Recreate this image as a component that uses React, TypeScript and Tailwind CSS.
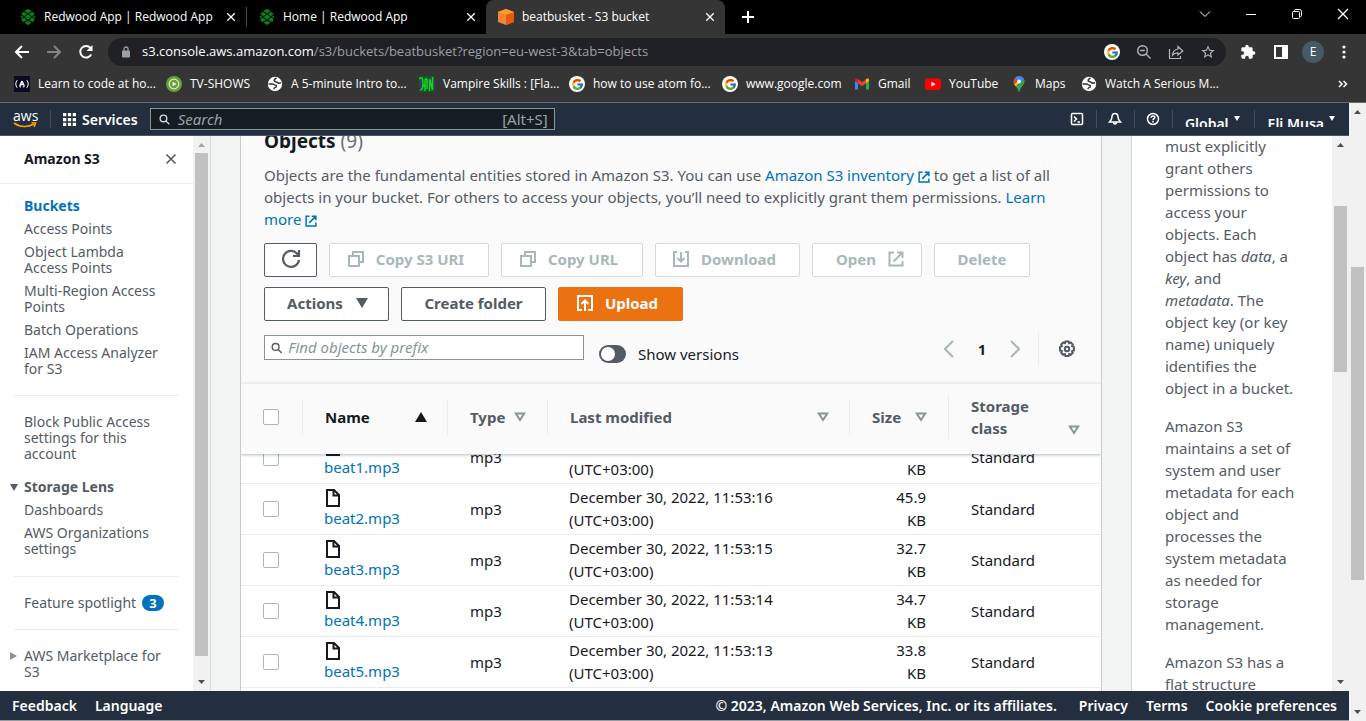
import React from "react";
import clsx from "clsx";
import { FcGoogle } from "react-icons/fc";
import { SiRedwoodjs } from "react-icons/si";
import { MdExtension, MdStarOutline } from "react-icons/md";

const bookmarks = [
  { icon: "fcc", label: "Learn to code at ho...", width: "w-[152px]" },
  { icon: "play", label: "TV-SHOWS", width: "w-[101px]" },
  { icon: "globe", label: "A 5-minute Intro to...", width: "w-[152px]" },
  { icon: "vampire", label: "Vampire Skills : [Fla...", width: "w-[150px]" },
  { icon: "google", label: "how to use atom fo...", width: "w-[153px]" },
  { icon: "google", label: "www.google.com", width: "w-[132px]" },
  { icon: "gmail", label: "Gmail", width: "w-[71px]" },
  { icon: "youtube", label: "YouTube", width: "w-[86px]" },
  { icon: "maps", label: "Maps", width: "w-[70px]" },
  { icon: "globe", label: "Watch A Serious M...", width: "w-[160px]" },
];

const objects = [
  { name: "beat1.mp3", modified: "December 30, 2022, 11:53:17", size: "33.5" },
  { name: "beat2.mp3", modified: "December 30, 2022, 11:53:16", size: "45.9" },
  { name: "beat3.mp3", modified: "December 30, 2022, 11:53:15", size: "32.7" },
  { name: "beat4.mp3", modified: "December 30, 2022, 11:53:14", size: "34.7" },
  { name: "beat5.mp3", modified: "December 30, 2022, 11:53:13", size: "33.8" },
];

function BookmarkIcon({ name }: { name: string }) {
  switch (name) {
    case "fcc":
      return (
        <svg viewBox="0 0 16 16" className="size-4" fill="none" stroke="#fff">
          <rect width="16" height="16" fill="#0a0a23" stroke="none" />
          <path d="M3.2 4.2C1.3 6.4 1.3 9.6 3.2 11.8M12.8 4.2c1.9 2.2 1.9 5.4 0 7.6" />
          <path d="M8 5 6 9.500c-.2.800.2 1.400.8 1.500M8 5l2 4.500c.2.800-.2 1.400-.8 1.500M7.200 8.500h1.600" strokeWidth="1.4" />
        </svg>
      );
    case "play":
      return (
        <svg viewBox="0 0 16 16" className="size-4">
          <circle cx="8" cy="8" r="8" fill="#689f38" />
          <circle cx="8" cy="8" r="4.8" fill="#689f38" stroke="#dcedc8" strokeWidth="1.2" />
          <path d="m6.6 5.8 3.8 2.2-3.8 2.2z" fill="#fff" />
        </svg>
      );
    case "vampire":
      return (
        <svg viewBox="0 0 16 16" className="size-4" fill="none">
          <rect width="16" height="16" fill="#0d5c20" />
          <path d="M3 1c-2 3 1 4-1 7s1 5 0 7M9 1c2 4-2 6 0 13M15.500 3v9" stroke="#5c1f9a" strokeWidth="1.600" />
          <path d="M0 3c3-3 4 0 4 5s-1 6-3 6M6 15V5c0-3 2-3 2 0v8M10.500 15V3l3 11V1M4 10h3" stroke="#12d81b" strokeWidth="1.500" />
        </svg>
      );
    case "google":
      return (
        <span className="flex size-4 items-center justify-center rounded-full bg-white">
          <FcGoogle className="size-[13px]" />
        </span>
      );
    case "gmail":
      return (
        <svg viewBox="0 0 16 16" className="size-4">
          <path d="M1 5v8.500h3V7z" fill="#4285f4" />
          <path d="M12 7v6.500h3V5z" fill="#34a853" />
          <path d="M1 3.800C1 2.500 2.500 2 3.500 2.800L4 3.200v4L1 5z" fill="#c5221f" />
          <path d="m4 3.200 4 3 4-3v4l-4 3-4-3z" fill="#ea4335" />
          <path d="m12 3.200.5-.4C13.500 2 15 2.500 15 3.800V5l-3 2.200z" fill="#fbbc04" />
        </svg>
      );
    case "youtube":
      return (
        <svg viewBox="0 0 16 16" className="size-4">
          <rect y="2.500" width="16" height="11.500" rx="2.800" fill="#f00" />
          <path d="m6.400 5.800 4.200 2.400-4.200 2.400z" fill="#fff" />
        </svg>
      );
    case "maps":
      return (
        <svg viewBox="0 0 16 16" className="size-4">
          <path d="M8 0c2.500 0 4.500 1.500 5.200 3.400L8 8 3.700 2C4.800.7 6.300 0 8 0z" fill="#4285f4" />
          <path d="M3.700 2 7 5 3.100 8a5.500 5.500 0 0 1 .6-6z" fill="#ea4335" />
          <path d="M3.100 8c.4 1 1.200 1.800 2 2.700L10 5 7 5z" fill="#fbbc04" />
          <path d="M13.200 3.400c.8 2 .2 3.800-1.200 5.600C10 11.500 9 13 8.500 15.500c-.2.600-.8.600-1 0-.3-2-1.200-3.300-2.400-4.800z" fill="#34a853" />
          <circle cx="8" cy="5.400" r="1.900" fill="#fff" />
        </svg>
      );
    default:
      return (
        <svg viewBox="0 0 16 16" className="size-4">
          <circle cx="8" cy="8" r="7.200" fill="#fff" />
          <path d="M9.500 2C7.500 3 6.500 4.200 7.500 5.200c1 .8 2.300.3 3 1.300s2 .8 3.500.3" fill="none" stroke="#353535" strokeWidth="1.500" />
          <path d="M1.500 8H5.500c1.500 0 1.800 1.200 3 1.300 1.300.2 1.200 1.800 0 2.100-1.300.3-1.300 1-1.700 1.800" fill="none" stroke="#353535" strokeWidth="1.400" />
        </svg>
      );
  }
}

function CloseIcon({ className }: { className?: string }) {
  return (
    <svg viewBox="0 0 12 12" className={className} fill="none" stroke="currentColor" strokeWidth="1.600">
      <path d="m1.500 1.500 9 9M10.500 1.500l-9 9" />
    </svg>
  );
}

function ExternalIcon({ className }: { className?: string }) {
  return (
    <svg viewBox="0 0 16 16" className={className} fill="none" stroke="currentColor" strokeWidth="2">
      <path d="M6 1.500H1.500v13h13V10M9 1.500h5.500V7M5.500 10.500l9-9" />
    </svg>
  );
}

function CopyIcon() {
  return (
    <svg viewBox="0 0 16 16" className="size-4" fill="none" stroke="currentColor" strokeWidth="2">
      <path d="M1 5h10v10H1zM5 5V1h10v10h-4" />
    </svg>
  );
}

function SearchIcon({ className }: { className?: string }) {
  return (
    <svg viewBox="0 0 16 16" className={className} fill="none" stroke="currentColor" strokeWidth="2">
      <circle cx="6.500" cy="6.500" r="4.800" />
      <path d="m10 10 5 5" />
    </svg>
  );
}

function SortIcon({ active }: { active?: boolean }) {
  return active ? (
    <svg viewBox="0 0 12 10" className="h-[10px] w-3 shrink-0">
      <path d="m6 0 6 10H0z" fill="#16191f" />
    </svg>
  ) : (
    <svg viewBox="0 0 12 10" className="h-[10px] w-3 shrink-0" fill="none" stroke="#879596" strokeWidth="2">
      <path d="M1.800 1.500h8.400L6 8z" />
    </svg>
  );
}

function Scrollbar({ before, thumb, after, idleUp }: { before: number; thumb: number; after: number; idleUp?: boolean }) {
  return (
    <div className="flex w-[17px] shrink-0 flex-col bg-[#f1f1f1]" aria-hidden="true">
      <svg viewBox="0 0 17 17" className="size-[17px]">
        <path d="m5 11 3.500-4 3.500 4z" fill={idleUp ? "#a3a3a3" : "#505050"} />
      </svg>
      <div className="flex flex-1 flex-col px-0.5">
        <div style={{ flexGrow: before }} />
        <div className="bg-[#c1c1c1]" style={{ flexGrow: thumb }} />
        <div style={{ flexGrow: after }} />
      </div>
      <svg viewBox="0 0 17 17" className="size-[17px]">
        <path d="m5 6 3.500 4L12 6z" fill="#505050" />
      </svg>
    </div>
  );
}

function BrowserTab({ title, active, divider }: { title: string; active?: boolean; divider?: boolean }) {
  return (
    <div
      className={clsx(
        "flex w-[239px] items-center pr-[10px] pl-3",
        active ? "rounded-t-lg bg-[#353535]" : "bg-black"
      )}
    >
      {active ? (
        <svg viewBox="0 0 16 16" className="size-4">
          <path d="m8 0 8 3v10l-8 3-8-3V3z" fill="#f58536" />
          <path d="m8 0 8 3-8 3-8-3z" fill="#ff9a2e" />
          <path d="M8 6l8-3v10l-8 3z" fill="#e8590c" />
        </svg>
      ) : (
        <SiRedwoodjs className="size-4 text-[#0a7d20]" />
      )}
      <span className="ml-2 flex-1 truncate">{title}</span>
      <button type="button" aria-label={"Close " + title}>
        <CloseIcon className="size-[10px]" />
      </button>
      {divider && <span className="-mr-[10px] ml-[10px] h-5 w-px bg-[#4a4a4a]" />}
    </div>
  );
}

function Browser() {
  return (
    <header className="shrink-0 border-b border-[#6b6b6b] bg-[#353535] font-['Open_Sans',sans-serif] text-[12px] text-white">
      <div className="flex h-[34px] bg-black pl-2">
        <BrowserTab title="Redwood App | Redwood App" divider />
        <BrowserTab title="Home | Redwood App" />
        <BrowserTab title="beatbusket - S3 bucket" active />
        <button type="button" aria-label="New tab" className="ml-4">
          <svg viewBox="0 0 14 14" className="size-[14px]" stroke="currentColor" strokeWidth="2">
            <path d="M7 1v12M1 7h12" />
          </svg>
        </button>
        <div className="ml-auto flex items-center gap-[34px] pr-[17px] pb-[6px]">
          <button type="button" aria-label="Search tabs">
            <svg viewBox="0 0 12 12" className="size-3" fill="none" stroke="currentColor">
              <path d="m1 3.500 5 5 5-5" />
            </svg>
          </button>
          <button type="button" aria-label="Minimize">
            <svg viewBox="0 0 12 12" className="size-3" stroke="currentColor">
              <path d="M1 6.500h10" />
            </svg>
          </button>
          <button type="button" aria-label="Restore">
            <svg viewBox="0 0 12 12" className="size-3" fill="none" stroke="currentColor">
              <rect x="1.500" y="3.500" width="7" height="7" rx="1" />
              <path d="M3.500 3.500v-1a1 1 0 0 1 1-1h4a2 2 0 0 1 2 2v4a1 1 0 0 1-1 1h-1" />
            </svg>
          </button>
          <button type="button" aria-label="Close window">
            <svg viewBox="0 0 12 12" className="size-3" stroke="currentColor" strokeWidth="1.300">
              <path d="m1 1 10 10M11 1 1 11" />
            </svg>
          </button>
        </div>
      </div>

      <div className="flex h-9 items-center pr-5 pl-[14px]">
        <button type="button" aria-label="Back">
          <svg viewBox="0 0 16 16" className="size-4" fill="none" stroke="currentColor" strokeWidth="2">
            <path d="M15 8H2M8 2 2 8l6 6" />
          </svg>
        </button>
        <button type="button" aria-label="Forward" className="ml-4 text-[#848484]">
          <svg viewBox="0 0 16 16" className="size-4" fill="none" stroke="currentColor" strokeWidth="2">
            <path d="M1 8h13M8 2l6 6-6 6" />
          </svg>
        </button>
        <button type="button" aria-label="Reload" className="ml-4">
          <svg viewBox="0 0 16 16" className="size-4" fill="none" stroke="currentColor" strokeWidth="2">
            <path d="M13.200 10.500A5.800 5.800 0 1 1 12.500 4" />
            <path d="M14.500 1v6h-6z" fill="currentColor" stroke="none" />
          </svg>
        </button>
        <div className="ml-[14px] flex h-7 flex-1 items-center rounded-full bg-[#202124] pr-[10px] pl-[13px] text-[13px]">
          <svg viewBox="0 0 10 12" className="h-3 w-[10px]">
            <rect x="1" y="4.500" width="8" height="7" rx="1" fill="#9aa0a6" />
            <path d="M3 5V3a2 2 0 0 1 4 0v2" fill="none" stroke="#9aa0a6" strokeWidth="1.300" />
          </svg>
          <p className="ml-[11px] flex-1 text-[#9aa0a6]">
            <span className="text-white">s3.console.aws.amazon.com</span>
            /s3/buckets/beatbusket?region=eu-west-3&amp;tab=objects
          </p>
          <div className="flex items-center gap-4 text-[#b5b8bb]">
            <BookmarkIcon name="google" />
            <svg viewBox="0 0 16 16" className="size-4" fill="none" stroke="currentColor" strokeWidth="1.400">
              <circle cx="6.500" cy="6.500" r="4.800" />
              <path d="m10 10 4.500 4.500M4.200 6.500h4.600" />
            </svg>
            <svg viewBox="0 0 16 16" className="size-4" fill="none" stroke="currentColor" strokeWidth="1.200">
              <path d="M1.500 5v9.500h11V12" />
              <path d="M10 2.500 14.800 7 10 11V8.800c-2.500 0-4.200.7-5.500 2.400.3-3 2-5.700 5.500-6.200z" />
            </svg>
            <MdStarOutline className="size-4" />
          </div>
        </div>
        <div className="ml-[14px] flex items-center gap-[18px]">
          <MdExtension className="size-4" />
          <svg viewBox="0 0 14 14" className="size-[14px]">
            <path d="M0 0h14v14H0zM2 2v10h6V2z" fill="#fff" fillRule="evenodd" />
          </svg>
          <span className="-ml-1 flex size-[22px] items-center justify-center rounded-full bg-[#455a64] text-[12px]">E</span>
          <svg viewBox="0 0 4 14" className="h-[14px] w-1" fill="#fff">
            <circle cx="2" cy="2" r="1.600" />
            <circle cx="2" cy="7" r="1.600" />
            <circle cx="2" cy="12" r="1.600" />
          </svg>
        </div>
      </div>

      <nav className="flex h-8 items-center pr-[18px] pb-1 pl-[14px]" aria-label="Bookmarks">
        {bookmarks.map((item) => (
          <a
            key={item.label}
            href="#"
            className={clsx("flex shrink-0 items-center gap-2 whitespace-nowrap", item.width)}
          >
            <BookmarkIcon name={item.icon} />
            {item.label}
          </a>
        ))}
        <svg viewBox="0 0 10 8" className="ml-auto h-2 w-[10px]" fill="none" stroke="#fff" strokeWidth="1.500">
          <path d="m1 1 3 3-3 3M5.500 1l3 3-3 3" />
        </svg>
      </nav>
    </header>
  );
}

function TopNav() {
  return (
    <div className="flex h-[33px] shrink-0 items-center border-b border-[#4b5563] bg-[#232f3e] text-white">
      <a href="#" aria-label="AWS home" className="ml-[13px] w-6 font-['Open_Sans',sans-serif] text-[14px] leading-3">
        aws
        <svg viewBox="0 0 24 6" className="h-[6px] w-6" fill="none" stroke="#f90" strokeWidth="1.600">
          <path d="M1 1c6 4.500 14 4.500 20 1M18.500.8l4 .2-1.300 4" />
        </svg>
      </a>
      <span className="ml-[13px] h-[18px] w-px bg-[#414d5c]" />
      <button type="button" className="ml-3 flex items-center gap-[6px] text-[14px] font-semibold">
        <svg viewBox="0 0 12 12" className="size-[13px]" fill="#fff">
          <path d="M0 0h3v3H0zM4.500 0h3v3h-3zM9 0h3v3H9zM0 4.500h3v3H0zM4.500 4.500h3v3h-3zM9 4.500h3v3H9zM0 9h3v3H0zM4.500 9h3v3h-3zM9 9h3v3H9z" />
        </svg>
        Services
      </button>
      <label className="ml-3 flex h-[22px] w-[405px] items-center border border-[#879596] bg-[#161c24] px-[6px] text-[15px] text-[#95a5a6]">
        <SearchIcon className="ml-[2px] size-[11px] text-[#d5dbdb]" />
        <input
          type="text"
          aria-label="Search"
          placeholder="Search"
          className="ml-2 min-w-0 flex-1 bg-transparent outline-none placeholder:text-[#95a5a6] placeholder:italic"
        />
        [Alt+S]
      </label>
      <div className="ml-auto flex items-center pr-[14px]">
        <button type="button" aria-label="CloudShell">
          <svg viewBox="0 0 14 14" className="size-[14px]" fill="none" stroke="#fff" strokeWidth="1.500">
            <rect x="1.500" y="1.500" width="11" height="11" rx="1" />
            <path d="m4 4.500 2.500 2.500L4 9.500M7.500 10H10" />
          </svg>
        </button>
        <span className="mr-[11px] ml-3 h-[18px] w-px bg-[#414d5c]" />
        <button type="button" aria-label="Notifications">
          <svg viewBox="0 0 14 14" className="size-[14px]" fill="none" stroke="#fff" strokeWidth="1.500">
            <path d="M7 1.500c-2 0-3 1.500-3 3.500 0 2-1 3.500-2.500 5h11C11 8.500 10 7 10 5c0-2-1-3.500-3-3.500zM5.500 10.500c0 2 3 2 3 0" />
          </svg>
        </button>
        <span className="mr-[11px] ml-3 h-[18px] w-px bg-[#414d5c]" />
        <button type="button" aria-label="Help">
          <svg viewBox="0 0 14 14" className="size-[14px]" fill="none" stroke="#fff" strokeWidth="1.500">
            <circle cx="7" cy="7" r="5.500" />
            <path d="M5.200 5.800C5.200 3.300 9 3.500 8.800 5.600 8.700 6.700 7 6.800 7 8.200M7 9v1.400" />
          </svg>
        </button>
        <span className="ml-3 h-[18px] w-px bg-[#414d5c]" />
        <button type="button" className="ml-3 flex h-4 gap-[5px] overflow-hidden text-[14px] leading-[26px] font-semibold">
          Global
          <svg viewBox="0 0 6 5" className="mt-[5px] h-[5px] w-[6px]">
            <path d="M0 0h6L3 5z" fill="#fff" />
          </svg>
        </button>
        <span className="ml-[14px] h-[18px] w-px bg-[#414d5c]" />
        <button type="button" className="ml-[13px] flex h-4 gap-[5px] overflow-hidden text-[14px] leading-[26px] font-semibold">
          Eli Musa
          <svg viewBox="0 0 6 5" className="mt-[5px] h-[5px] w-[6px]">
            <path d="M0 0h6L3 5z" fill="#fff" />
          </svg>
        </button>
      </div>
    </div>
  );
}

function SideNav() {
  return (
    <aside className="flex w-[211px] shrink-0 border-r border-[#d5dbdb] bg-white text-[#545b64]">
      <div className="flex-1 overflow-hidden">
        <div className="flex h-12 items-center justify-between border-b border-[#eaeded] pr-4 pb-[2px] pl-6">
          <h2 className="text-[14px] font-bold text-[#16191f]">Amazon S3</h2>
          <button type="button" aria-label="Close navigation">
            <CloseIcon className="size-3" />
          </button>
        </div>
        <nav className="pt-[14px] pr-[14px] pl-[14px] text-[14px] leading-4">
          <ul className="flex flex-col gap-[7px] px-[10px] pb-[18px]">
            <li><a href="#" className="font-bold text-[#0073bb]">Buckets</a></li>
            <li><a href="#">Access Points</a></li>
            <li><a href="#">Object Lambda<br />Access Points</a></li>
            <li><a href="#">Multi-Region Access<br />Points</a></li>
            <li><a href="#">Batch Operations</a></li>
            <li><a href="#">IAM Access Analyzer<br />for S3</a></li>
          </ul>
          <div className="border-t border-[#eaeded] px-[10px] pt-[18px] pb-[19px] whitespace-nowrap">
            <a href="#">Block Public Access<br />settings for this<br />account</a>
            <button type="button" className="mt-[17px] -ml-[14px] flex items-center gap-[6px] font-bold">
              <svg viewBox="0 0 8 7" className="h-[7px] w-2">
                <path d="M0 0h8L4 7z" fill="#545b64" />
              </svg>
              Storage Lens
            </button>
            <ul className="mt-[7px] flex flex-col gap-[7px]">
              <li><a href="#">Dashboards</a></li>
              <li><a href="#">AWS Organizations<br />settings</a></li>
            </ul>
          </div>
          <div className="flex items-center gap-[6px] border-t border-[#eaeded] py-[18px] pl-[10px] whitespace-nowrap">
            <a href="#">Feature spotlight</a>
            <span className="rounded-full bg-[#0073bb] px-[7px] text-[13px] font-bold text-white">3</span>
          </div>
          <div className="border-t border-[#eaeded] py-[18px]">
            <button type="button" className="-ml-1 flex items-start gap-[7px] text-left whitespace-nowrap">
              <svg viewBox="0 0 7 8" className="mt-1 h-2 w-[7px] shrink-0">
                <path d="m0 0 7 4-7 4z" fill="#879596" />
              </svg>
              <span>AWS Marketplace for<br />S3</span>
            </button>
          </div>
        </nav>
      </div>
      <Scrollbar before={0} thumb={503} after={18} idleUp />
    </aside>
  );
}

type ButtonProps = { children: React.ReactNode; className: string; disabled?: boolean; label?: string };

function ActionButton({ children, className, disabled, label }: ButtonProps) {
  return (
    <button
      type="button"
      disabled={disabled}
      aria-label={label}
      className={clsx(
        "flex h-[34px] items-center justify-center rounded-[2px] border pb-[2px] text-[15px] font-bold",
        disabled && "border-[#d5dbdb] bg-white text-[#aab7b8]",
        className
      )}
    >
      {children}
    </button>
  );
}

function Columns() {
  return (
    <colgroup>
      <col className="w-[61px]" />
      <col className="w-[145px]" />
      <col className="w-[100px]" />
      <col className="w-[302px]" />
      <col className="w-[99px]" />
      <col />
    </colgroup>
  );
}

function Checkbox({ label }: { label: string }) {
  return (
    <input
      type="checkbox"
      aria-label={label}
      className="block size-4 appearance-none rounded-[2px] border border-[#aab7b8] bg-white"
    />
  );
}

function HeaderCell({ title, active, className }: { title: string; active?: boolean; className?: string }) {
  return (
    <th className="p-0 pb-[3px] text-left font-bold">
      <div className={clsx("flex min-h-[36px] items-center justify-between border-l border-[#eaeded] pl-[22px]", className)}>
        {title}
        <SortIcon active={active} />
      </div>
    </th>
  );
}

function ObjectsCard() {
  return (
    <section className="mx-[29px] flex min-w-0 flex-1 flex-col overflow-hidden border-x border-[#c6cccc] bg-white">
      <div className="bg-[#fafafa] px-[23px] pb-5">
        <h2 className="-mt-[6px] text-[19px] leading-[22px] font-bold text-[#16191f]">
          Objects <span className="font-normal text-[#687078]">(9)</span>
        </h2>
        <p className="mt-3 text-[15px] leading-[22px] whitespace-nowrap text-[#545b64]">
          Objects are the fundamental entities stored in Amazon S3. You can use{" "}
          <a href="#" className="text-[#0073bb]">
            Amazon S3 inventory <ExternalIcon className="inline size-3" />
          </a>{" "}
          to get a list of all<br />
          objects in your bucket. For others to access your objects, you’ll need to explicitly grant them permissions.{" "}
          <a href="#" className="text-[#0073bb]">
            Learn<br />
            more <ExternalIcon className="inline size-3" />
          </a>
        </p>
        <div className="mt-[13px] flex flex-wrap gap-x-3 gap-y-[10px]">
          <ActionButton label="Refresh" className="w-[53px] border-[#545b64] bg-white text-[#545b64]">
            <svg viewBox="0 0 20 20" className="size-5" fill="none" stroke="currentColor" strokeWidth="2.200">
              <path d="M18 11a8 8 0 1 1-2-6.500l1.500 2M18 1v6h-6" />
            </svg>
          </ActionButton>
          <ActionButton disabled className="w-40 gap-3 pr-[6px]">
            <CopyIcon />
            Copy S3 URI
          </ActionButton>
          <ActionButton disabled className="w-[142px] gap-3 pr-[6px]">
            <CopyIcon />
            Copy URL
          </ActionButton>
          <ActionButton disabled className="w-[145px] gap-3 pr-[6px]">
            <svg viewBox="0 0 16 16" className="size-4" fill="none" stroke="currentColor" strokeWidth="2">
              <path d="M4 1H1v14h14V1h-3M8 1v9M4.500 7 8 10.500 11.500 7" />
            </svg>
            Download
          </ActionButton>
          <ActionButton disabled className="w-[110px] gap-3 pl-[6px]">
            Open
            <ExternalIcon className="size-4" />
          </ActionButton>
          <ActionButton disabled className="w-24">Delete</ActionButton>
          <ActionButton className="w-[125px] gap-[13px] border-[#545b64] bg-white pl-[2px] text-[#545b64]">
            Actions
            <svg viewBox="0 0 12 10" className="h-[10px] w-3">
              <path d="M0 0h12L6 10z" fill="currentColor" />
            </svg>
          </ActionButton>
          <ActionButton className="w-[145px] border-[#545b64] bg-white text-[#545b64]">Create folder</ActionButton>
          <ActionButton className="w-[125px] gap-3 border-[#ec7211] bg-[#ec7211] pr-[6px] text-white">
            <svg viewBox="0 0 16 16" className="size-4" fill="none" stroke="currentColor" strokeWidth="2">
              <path d="M5 15H1V1h14v14h-4M8 16V6M4.500 9 8 5.500 11.500 9" />
            </svg>
            Upload
          </ActionButton>
        </div>
        <div className="mt-[14px] flex h-7 items-center">
          <label className="mb-[3px] flex h-[25px] w-80 items-center border border-[#879596] bg-white px-[6px]">
            <SearchIcon className="size-3 text-[#545b64]" />
            <input
              type="text"
              aria-label="Find objects by prefix"
              placeholder="Find objects by prefix"
              className="ml-[6px] w-full bg-transparent text-[15px] outline-none placeholder:text-[#879596] placeholder:italic"
            />
          </label>
          <label className="mt-[10px] ml-[15px] flex items-center gap-3 text-[15px] text-[#16191f]">
            <input
              type="checkbox"
              role="switch"
              className="flex h-[18px] w-[27px] appearance-none items-center rounded-full bg-[#545b64] px-0.5 before:size-[14px] before:rounded-full before:bg-white"
            />
            Show versions
          </label>
          <div className="ml-auto flex items-center">
            <button type="button" aria-label="Previous page" className="text-[#aab7b8]">
              <svg viewBox="0 0 10 18" className="h-[18px] w-[10px]" fill="none" stroke="currentColor" strokeWidth="2">
                <path d="M9 1 1 9l8 8" />
              </svg>
            </button>
            <span className="w-14 text-center text-[14px] font-bold text-[#16191f]">1</span>
            <button type="button" aria-label="Next page" className="text-[#aab7b8]">
              <svg viewBox="0 0 10 18" className="h-[18px] w-[10px]" fill="none" stroke="currentColor" strokeWidth="2">
                <path d="m1 1 8 8-8 8" />
              </svg>
            </button>
            <span className="ml-[18px] h-[34px] w-px bg-[#eaeded]" />
            <button type="button" aria-label="Preferences" className="mr-[2px] ml-[19px] text-[#545b64]">
              <svg viewBox="0 0 18 18" className="size-[18px]" fill="none" stroke="currentColor" strokeWidth="2">
                <circle cx="9" cy="9" r="2.200" />
                <path d="m7.500 1.500h3l.6 1.700 1.700-.7 2 2-.7 1.700 1.800.7v3.600l-1.800.6.7 1.700-2 2-1.700-.7-.6 1.900h-3l-.6-1.900-1.700.7-2-2 .7-1.700-1.900-.6V6.900l1.900-.7-.7-1.700 2-2 1.700.7z" />
              </svg>
            </button>
          </div>
        </div>
      </div>

      <table className="relative w-full table-fixed border-t border-[#eaeded] bg-[#fafafa] text-[15px] leading-[22px] text-[#545b64] shadow-[0_1px_3px_rgba(0,28,36,0.3)]">
        <Columns />
        <thead>
          <tr className="h-[70px]">
            <th className="p-0 pb-[3px] pl-[22px]"><Checkbox label="Select all objects" /></th>
            <HeaderCell title="Name" active className="pr-5 text-[#16191f]" />
            <HeaderCell title="Type" className="pr-[21px]" />
            <HeaderCell title="Last modified" className="pr-5" />
            <HeaderCell title="Size" className="pr-[21px]" />
            <th className="p-0 pb-[3px] text-left font-bold">
              <div className="flex min-h-[36px] items-end justify-between border-l border-[#eaeded] pr-[21px] pl-[22px]">
                <span>Storage<br />class</span>
                <span className="pb-1"><SortIcon /></span>
              </div>
            </th>
          </tr>
        </thead>
      </table>

      <div className="min-h-0 flex-1 overflow-hidden">
        <table className="-mt-[21px] w-full table-fixed text-[15px] leading-[23px] text-[#16191f]">
          <Columns />
          <tbody>
            {objects.map((item) => (
              <tr key={item.name} className="h-[51px] border-b border-[#eaeded]">
                <td className="p-0 pl-[22px]"><Checkbox label={"Select " + item.name} /></td>
                <td className="p-0 pl-[22px]">
                  <svg viewBox="0 0 14 18" className="mt-px ml-[2px] h-[18px] w-[14px]" fill="none" stroke="currentColor" strokeWidth="2">
                    <path d="M1 1h7l5 5v11H1zM7.500 1v5.500h5.500" />
                  </svg>
                  <a href="#" className="text-[#0073bb]">{item.name}</a>
                </td>
                <td className="p-0 pl-[23px]">mp3</td>
                <td className="p-0 pl-[22px]">{item.modified}<br />(UTC+03:00)</td>
                <td className="p-0 pr-[22px] text-right">{item.size}<br />KB</td>
                <td className="p-0 pl-[23px]">Standard</td>
              </tr>
            ))}
          </tbody>
        </table>
      </div>
    </section>
  );
}

function HelpPanel() {
  return (
    <aside className="flex w-[218px] shrink-0 border-l border-[#d5dbdb] bg-white">
      <div className="flex flex-1 flex-col gap-4 overflow-hidden pl-[33px] text-[15px] leading-[22px] whitespace-nowrap text-[#545b64]">
        <p className="-mt-px">
          must explicitly<br />grant others<br />permissions to<br />access your<br />objects. Each<br />
          object has <em>data</em>, a<br /><em>key</em>, and<br /><em>metadata</em>. The<br />
          object key (or key<br />name) uniquely<br />identifies the<br />object in a bucket.
        </p>
        <p>
          Amazon S3<br />maintains a set of<br />system and user<br />metadata for each<br />object and<br />
          processes the<br />system metadata<br />as needed for<br />storage<br />management.
        </p>
        <p>Amazon S3 has a<br />flat structure</p>
      </div>
      <Scrollbar before={53} thumb={166} after={302} />
    </aside>
  );
}

function Footer() {
  return (
    <footer className="flex h-[30px] shrink-0 items-center gap-[18px] border-b border-[#9a9a9a] bg-[#232f3e] px-3 text-[14px] font-semibold whitespace-nowrap text-white">
      <a href="#">Feedback</a>
      <a href="#" className="mr-auto">Language</a>
      <span className="mr-1">© 2023, Amazon Web Services, Inc. or its affiliates.</span>
      <a href="#">Privacy</a>
      <a href="#">Terms</a>
      <a href="#">Cookie preferences</a>
    </footer>
  );
}

export default function App() {
  return (
    <div className="flex h-screen flex-col overflow-hidden font-['Noto_Sans',sans-serif]">
      <Browser />
      <div className="flex min-h-0 flex-1">
        <div className="flex min-w-0 flex-1 flex-col">
          <TopNav />
          <main className="flex min-h-0 flex-1 bg-[#f2f3f3]">
            <SideNav />
            <ObjectsCard />
            <HelpPanel />
          </main>
          <Footer />
        </div>
        <Scrollbar before={147} thumb={313} after={124} />
      </div>
    </div>
  );
}
